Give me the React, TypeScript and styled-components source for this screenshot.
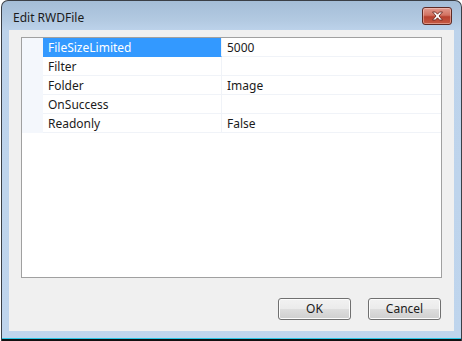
import React from "react";
import styled, { createGlobalStyle } from "styled-components";

const GlobalStyle = createGlobalStyle`
  html, body {
    margin: 0;
    padding: 0;
    background: #ffffff;
  }
  body {
    font-family: "Noto Sans", "Liberation Sans", sans-serif;
    font-size: 12px;
    color: #1e1e1e;
  }
`;

const Screen = styled.div`
  width: 462px;
  height: 341px;
  padding-left: 1px;
  box-sizing: border-box;
  overflow: hidden;
`;

const Window = styled.div`
  width: 461px;
  height: 341px;
  box-sizing: border-box;
  border: 1px solid #3a3f46;
  border-bottom: none;
  border-radius: 7px 7px 0 0;
  background: linear-gradient(180deg, #a4bdd7 0px, #b3cae2 20px, #bdd3eb 30px, #bfd5ed 100%);
  display: flex;
  flex-direction: column;
`;

const TitleBar = styled.div`
  height: 29px;
  display: flex;
  align-items: center;
  justify-content: space-between;
  padding: 0 9px 0 11px;
`;

const Title = styled.span`
  font-size: 12px;
  color: #1b1b1b;
  padding-top: 5px;
`;

const CloseButton = styled.div`
  width: 30px;
  height: 18px;
  box-sizing: border-box;
  margin-top: 2px;
  border: 1px solid #5e2a24;
  border-radius: 3px;
  background: linear-gradient(180deg, #e29b8f 0%, #d27261 45%, #b8412f 55%, #c55a43 100%);
  box-shadow: inset 0 0 0 1px rgba(255, 220, 210, 0.45);
  display: flex;
  align-items: center;
  justify-content: center;
`;

const Client = styled.div`
  margin: 0 7px;
  height: 302px;
  background: #f0f0f0;
  display: flex;
  flex-direction: column;
  padding: 7px 12px 0 12px;
  box-sizing: border-box;
`;

const BottomEdge = styled.div`
  margin-top: 7px;
  height: 1px;
  background: #29c6e6;
`;

const BlackEdge = styled.div`
  height: 2px;
  background: #111;
`;

const Grid = styled.div`
  height: 241px;
  border: 1px solid #a0a0a0;
  background: #ffffff;
  box-sizing: border-box;
  display: flex;
  flex-direction: column;
`;

const Row = styled.div`
  display: grid;
  grid-template-columns: 21px 179px 1fr;
  height: 19px;
`;

const Margin = styled.div`
  background: #f4f7fc;
`;

const NameCell = styled.div<{ selected?: boolean }>`
  background: ${({ selected }) => (selected ? "#3399ff" : "#ffffff")};
  color: ${({ selected }) => (selected ? "#ffffff" : "#1b1b1b")};
  border-bottom: 1px solid ${({ selected }) => (selected ? "#3399ff" : "#f0f3f8")};
  border-right: 1px solid #f0f3f8;
  padding: 1px 0 0 5px;
  line-height: 17px;
  white-space: nowrap;
`;

const ValueCell = styled.div`
  border-bottom: 1px solid #f0f3f8;
  padding: 1px 0 0 5px;
  line-height: 17px;
  color: #1b1b1b;
  white-space: nowrap;
`;

const Footer = styled.div`
  display: flex;
  justify-content: flex-end;
  gap: 17px;
  padding-top: 20px;
  margin-right: 1px;
`;

const Button = styled.button`
  width: 73px;
  height: 22px;
  box-sizing: border-box;
  border: 1px solid #707070;
  border-radius: 3px;
  background: linear-gradient(180deg, #f2f2f2 0%, #ebebeb 48%, #dddddd 52%, #cfcfcf 100%);
  box-shadow: inset 0 0 0 1px #fcfcfc;
  font-family: "Noto Sans", "Liberation Sans", sans-serif;
  font-size: 12px;
  color: #1b1b1b;
  padding: 0;
  line-height: 18px;
`;

const rows = [
  { name: "FileSizeLimited", value: "5000", selected: true },
  { name: "Filter", value: "" },
  { name: "Folder", value: "Image" },
  { name: "OnSuccess", value: "" },
  { name: "Readonly", value: "False" },
];

function CloseGlyph() {
  return (
    <svg width="13" height="10" viewBox="0 0 13 10">
      <path
        d="M1.5 1 L4.5 1 L6.5 3.2 L8.5 1 L11.5 1 L8 5 L11.5 9 L8.5 9 L6.5 6.8 L4.5 9 L1.5 9 L5 5 Z"
        fill="#ffffff"
        stroke="#6b2a22"
        strokeWidth="0.9"
        strokeLinejoin="round"
      />
    </svg>
  );
}

export default function App() {
  return (
    <Screen>
      <GlobalStyle />
      <Window>
        <TitleBar>
          <Title>Edit RWDFile</Title>
          <CloseButton>
            <CloseGlyph />
          </CloseButton>
        </TitleBar>
        <Client>
          <Grid>
            {rows.map((r) => (
              <Row key={r.name}>
                <Margin />
                <NameCell selected={r.selected}>{r.name}</NameCell>
                <ValueCell>{r.value}</ValueCell>
              </Row>
            ))}
          </Grid>
          <Footer>
            <Button>OK</Button>
            <Button>Cancel</Button>
          </Footer>
        </Client>
        <BottomEdge />
        <BlackEdge />
      </Window>
    </Screen>
  );
}
